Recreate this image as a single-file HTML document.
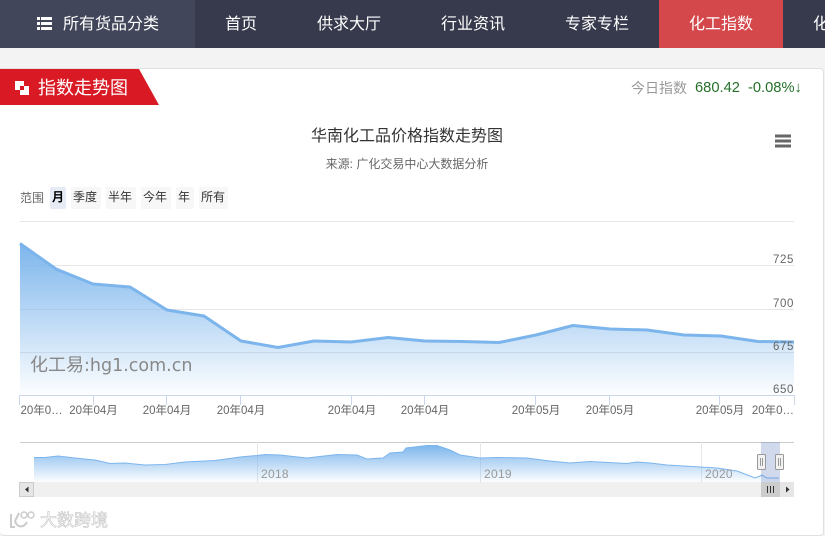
<!DOCTYPE html>
<html lang="zh">
<head>
<meta charset="utf-8">
<style>
html,body{margin:0;padding:0;width:825px;height:536px;overflow:hidden;background:#f3f3f3;font-family:"Liberation Sans","Noto Sans CJK SC",sans-serif}
#nav{position:absolute;left:0;top:0;width:825px;height:48px;background:#373a4c;color:#fff;font-size:16px;overflow:hidden}
#nav .all{position:absolute;left:0;top:0;width:195px;height:48px;background:#42465a}
#nav .active{position:absolute;left:659px;top:0;width:124px;height:48px;background:#d4474b}
#nav span{position:absolute;top:13px;line-height:24px;white-space:nowrap}
#card{position:absolute;left:0;top:68px;width:823px;height:466px;background:#fff;border:1px solid #e0e0e0;border-left:0;border-radius:0 4px 4px 4px}
#tabt{position:absolute;left:38px;top:75px;line-height:27px;font-size:18px;color:#fff;white-space:nowrap}
.r{position:absolute;top:78px;line-height:20px;white-space:nowrap}
svg{position:absolute;left:0;top:0}
svg text{font-family:"Liberation Sans","Noto Sans CJK SC",sans-serif}
</style>
</head>
<body>
<div id="nav">
<div class="all"></div>
<div class="active"></div>
<svg width="20" height="48" style="left:36px"><g fill="#fff"><rect x="1" y="17" width="3" height="3"/><rect x="5" y="17" width="11" height="3"/><rect x="1" y="22" width="3" height="3"/><rect x="5" y="22" width="11" height="3"/><rect x="1" y="27" width="3" height="3"/><rect x="5" y="27" width="11" height="3"/></g></svg>
<span style="left:63px">所有货品分类</span>
<span style="left:225px">首页</span>
<span style="left:317px">供求大厅</span>
<span style="left:441px">行业资讯</span>
<span style="left:565px">专家专栏</span>
<span style="left:689px">化工指数</span>
<span style="left:813px">化工易</span>
</div>
<div id="card"></div>
<svg id="tab" width="160" height="36" style="left:0;top:69px"><polygon points="0,0 139,0 159,36 0,36" fill="#d91a24"/><rect x="15" y="12" width="9" height="9" fill="#fff"/><rect x="20" y="17" width="9" height="9" fill="#fff"/><rect x="20" y="17" width="4" height="4" fill="#d91a24"/></svg>
<div id="tabt">指数走势图</div>
<div class="r" style="left:631px;font-size:14px;color:#999">今日指数</div>
<div class="r" style="left:695px;font-size:14.7px;color:#25702a">680.42</div>
<div class="r" style="left:748px;font-size:14.7px;color:#25702a">-0.08%↓</div>

<svg width="825" height="536">
<defs>
<linearGradient id="g1" gradientUnits="userSpaceOnUse" x1="0" y1="243" x2="0" y2="395"><stop offset="0" stop-color="#7cb5ec"/><stop offset="1" stop-color="#7cb5ec" stop-opacity="0.02"/></linearGradient>
<linearGradient id="g2" gradientUnits="userSpaceOnUse" x1="0" y1="445" x2="0" y2="482"><stop offset="0" stop-color="#7cb5ec"/><stop offset="1" stop-color="#7cb5ec" stop-opacity="0.02"/></linearGradient>
</defs>
<text x="407" y="141" text-anchor="middle" font-size="16" fill="#333">华南化工品价格指数走势图</text>
<text x="407" y="168" text-anchor="middle" font-size="12" fill="#666">来源: 广化交易中心大数据分析</text>
<g fill="#666"><rect x="775" y="134.500" width="16" height="3"/><rect x="775" y="139.500" width="16" height="3"/><rect x="775" y="144.500" width="16" height="3"/></g>

<text x="20" y="202" font-size="12" fill="#666">范围</text>
<rect x="50" y="187" width="16" height="22" rx="2" fill="#e6ebf5"/>
<rect x="71" y="187" width="30" height="22" rx="2" fill="#f7f7f7"/>
<rect x="106" y="187" width="30" height="22" rx="2" fill="#f7f7f7"/>
<rect x="141" y="187" width="30" height="22" rx="2" fill="#f7f7f7"/>
<rect x="176" y="187" width="18" height="22" rx="2" fill="#f7f7f7"/>
<rect x="199" y="187" width="29" height="22" rx="2" fill="#f7f7f7"/>
<g font-size="12" fill="#333">
<text x="52" y="201" font-weight="bold" fill="#000">月</text>
<text x="73" y="201">季度</text>
<text x="108" y="201">半年</text>
<text x="143" y="201">今年</text>
<text x="178" y="201">年</text>
<text x="201" y="201">所有</text>
</g>

<g stroke="#e6e6e6" stroke-width="1" fill="none">
<path d="M20 221.500H794M20 265.500H794M20 309.500H794M20 352.500H794"/>
</g>
<path fill="url(#g1)" d="M20 243.500L56 269L93 284L130 287L167 310L204 316L241 341L278 347.500L314 341L351 342L388 337.500L425 341L462 341.500L499 342.500L536 335L573 325.500L610 329L647 330L684 335L721 336L758 341.500L794 342V395H20Z"/>
<path fill="none" stroke="#7cb5ec" stroke-width="3" stroke-linejoin="round" d="M20 243.500L56 269L93 284L130 287L167 310L204 316L241 341L278 347.500L314 341L351 342L388 337.500L425 341L462 341.500L499 342.500L536 335L573 325.500L610 329L647 330L684 335L721 336L758 341.500L794 342"/>
<path fill="none" stroke="#ccd6eb" stroke-width="1" d="M19 395.500H794.500M19.500 395V405M93.500 395V405M166.500 395V405M240.500 395V405M351.500 395V405M424.500 395V405M535.500 395V405M609.500 395V405M719.500 395V405M794.500 395V405"/>
<text x="30" y="371" font-size="18" fill="#888">化工易<tspan font-family="DejaVu Sans" font-size="17.500">:hg1.com.cn</tspan></text>

<g font-size="11.500" fill="#666">
<g text-anchor="end" letter-spacing=".6">
<text x="794" y="263">725</text><text x="794" y="307">700</text><text x="794" y="350">675</text><text x="794" y="393">650</text>
</g>
<text x="20.500" y="414">20年0…</text>
<g text-anchor="middle">
<text x="93.500" y="414">20年04月</text>
<text x="167" y="414">20年04月</text>
<text x="241" y="414">20年04月</text>
<text x="352" y="414">20年04月</text>
<text x="425" y="414">20年04月</text>
<text x="536" y="414">20年05月</text>
<text x="610" y="414">20年05月</text>
<text x="720" y="414">20年05月</text>
</g>
<text x="794" y="414" text-anchor="end">20年0…</text>
</g>

<path d="M20 442.500H794" stroke="#ccc" fill="none"/>
<path d="M257.500 442V482M480.500 442V482M701.500 442V482" stroke="#e6e6e6" fill="none"/>
<path fill="url(#g2)" d="M34 457.500L45 457.500L58 456L75 458L95 460L110 463.500L125 463L145 465L165 464.500L185 462L215 460.500L240 457L257 455.500L265 454.500L280 455L307 458L337 454.500L357 455L367 459L383 458L390 453L403 452L406 448L427 445.500L437 445.500L450 450L460 455L467 456L480 458L497 457.500L527 458L550 461L570 463L590 461.500L627 463.500L637 462L650 463L667 465L700 467L717 468L737 471L755 478L760 476L762 475L767 478L779 478V482H34Z"/>
<path fill="none" stroke="#7cb5ec" stroke-width="1" d="M34 457.500L45 457.500L58 456L75 458L95 460L110 463.500L125 463L145 465L165 464.500L185 462L215 460.500L240 457L257 455.500L265 454.500L280 455L307 458L337 454.500L357 455L367 459L383 458L390 453L403 452L406 448L427 445.500L437 445.500L450 450L460 455L467 456L480 458L497 457.500L527 458L550 461L570 463L590 461.500L627 463.500L637 462L650 463L667 465L700 467L717 468L737 471L755 478L760 476L762 475L767 478L779 478"/>
<g font-size="12" fill="#999" letter-spacing=".3">
<text x="261" y="478">2018</text><text x="484" y="478">2019</text><text x="705" y="478">2020</text>
</g>
<rect x="761" y="442" width="19" height="40" fill="#6685c2" fill-opacity=".3"/>
<rect x="20" y="482" width="774" height="15" fill="#f0f0f0"/>
<rect x="19.500" y="482.500" width="14" height="14" fill="#e6e6e6" stroke="#ccc"/>
<path d="M28.500 486.500L25 489.500L28.500 492.500Z" fill="#333"/>
<rect x="761" y="482" width="19" height="15" fill="#ccc"/>
<path d="M767.500 486V493M770.500 486V493M773.500 486V493" stroke="#333" fill="none"/>
<rect x="780" y="482" width="14" height="15" fill="#e6e6e6"/>
<path d="M786 486.500L789.500 489.500L786 492.500Z" fill="#333"/>
<g fill="#f2f2f2" stroke="#999">
<rect x="757.500" y="454.500" width="8" height="15" rx="1"/>
<rect x="775.500" y="454.500" width="8" height="15" rx="1"/>
</g>
<path d="M760.500 458V466M762.500 458V466M778.500 458V466M780.500 458V466" stroke="#999" fill="none"/>

<g fill="none" stroke="#ccc" stroke-width="2">
<path d="M11 514V527H15M15 521L19 513M15 521C17 528 24 528 27 522"/>
<circle cx="24" cy="515" r="3" stroke-width="1.500"/>
<circle cx="31" cy="515" r="3" stroke-width="1.500"/>
</g>
<text x="40" y="526" font-size="17" fill="#fff" stroke="#c4c4c4" stroke-width=".6">大数跨境</text>
</svg>
</body>
</html>
